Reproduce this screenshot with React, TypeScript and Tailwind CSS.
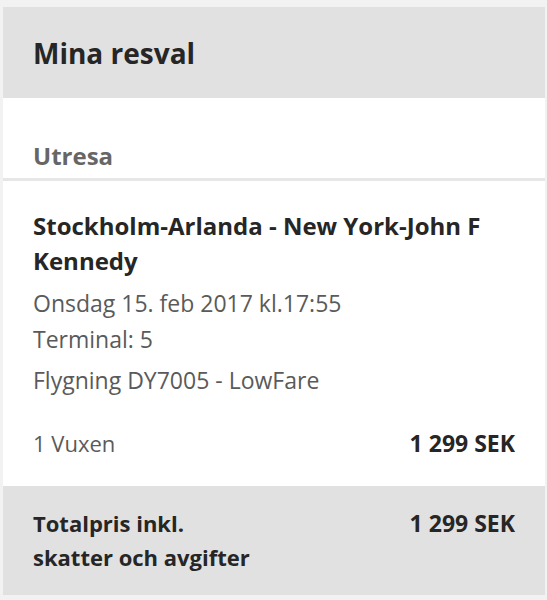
import React from 'react';

export default function App() {
  return (
    <div className="w-[547px] h-[600px] bg-[#f2f2f2] pt-[7px] pl-[3px] pr-[2px] font-['Open_Sans','Liberation_Sans',sans-serif]">
      <div className="bg-white">
        <div className="h-[91px] bg-[#e1e1e1] px-[30px] flex items-center">
          <h2 className="text-[28px] font-bold text-[#262626] leading-none">Mina resval</h2>
        </div>

        <div className="h-[83px] px-[30px] flex items-end pb-[5px] border-b-[3px] border-[#e6e6e6]">
          <h3 className="text-[24px] font-bold text-[#666666] leading-[34px]">Utresa</h3>
        </div>

        <div className="px-[30px] pt-[27px] pb-[25px]">
          <div className="text-[24px] font-bold text-[#262626] leading-[35px]">
            Stockholm-Arlanda - New York-John F Kennedy
          </div>
          <div className="mt-[7px] text-[23px] text-[#5a5a5a] leading-[36px]">
            <div>Onsdag 15. feb 2017 kl.17:55</div>
            <div>Terminal: 5</div>
            <div className="mt-[5px]">Flygning DY7005 - LowFare</div>
          </div>
          <div className="mt-[27px] flex justify-between leading-[36px] text-[22px]">
            <span className="text-[#5a5a5a]">1 Vuxen</span>
            <span className="text-[23px] font-bold text-[#262626]">1 299 SEK</span>
          </div>
        </div>

        <div className="bg-[#e1e1e1] px-[30px] pt-[20px] pb-[21px] flex justify-between text-[22px] font-bold text-[#262626] leading-[34px]">
          <div>
            Totalpris inkl.
            <br />
            skatter och avgifter
          </div>
          <div className="text-[23px]">1 299 SEK</div>
        </div>
      </div>
    </div>
  );
}
